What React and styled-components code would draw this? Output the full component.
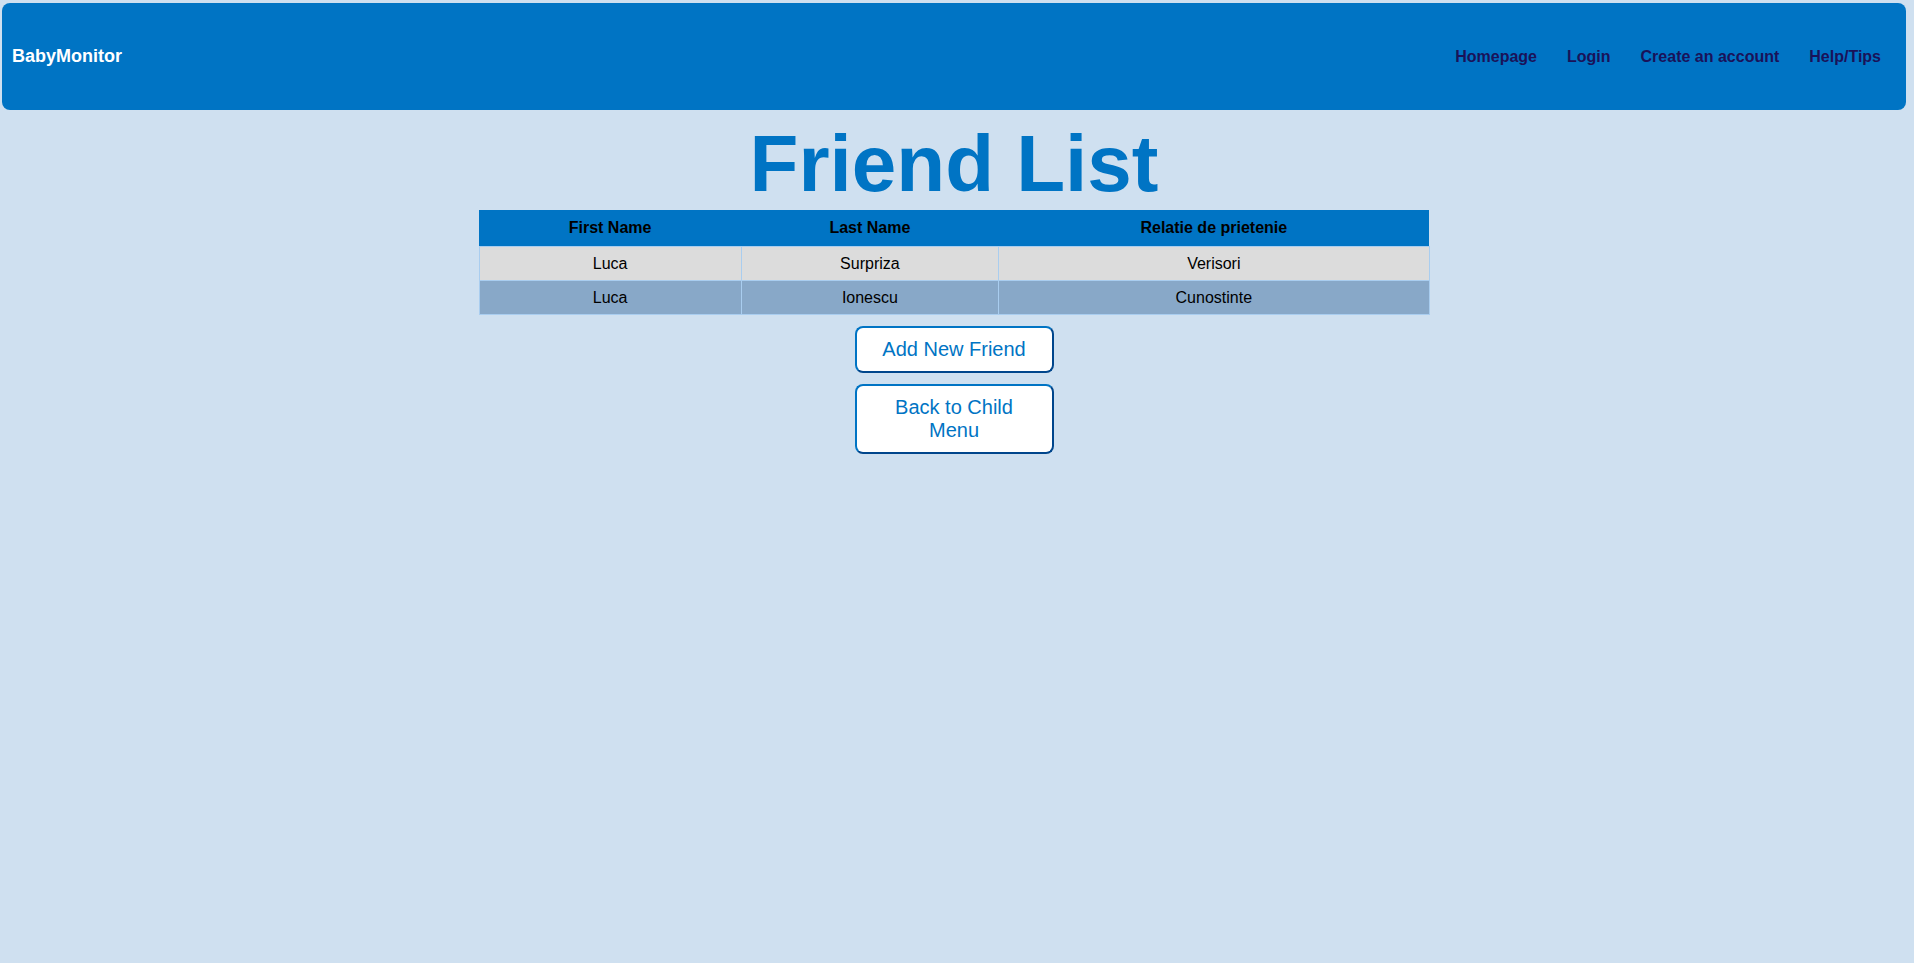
import React from "react";
import styled, { createGlobalStyle } from "styled-components";

// === styles === //

const GlobalStyle = createGlobalStyle`
  html, body {
    margin: 0;
    padding: 0;
    background: #cfe0f0;
    font-family: "Liberation Sans", Arial, sans-serif;
  }
  body {
    min-height: 963px;
  }
`;

const Page = styled.div`
  padding: 3px 8px 0 2px;
  display: flex;
  flex-direction: column;
  align-items: center;
`;

const Nav = styled.nav`
  box-sizing: border-box;
  width: 100%;
  height: 107px;
  background: #0074c4;
  border-radius: 8px;
  display: flex;
  align-items: center;
  justify-content: space-between;
  padding: 0 25px 0 10px;
`;

const Logo = styled.a`
  color: #fff;
  font-size: 18px;
  font-weight: bold;
  text-decoration: none;
`;

const NavMenu = styled.ul`
  display: flex;
  gap: 30px;
  list-style: none;
  margin: 0;
  padding: 0;
`;

const NavLink = styled.a`
  color: #1a1259;
  font-size: 16px;
  font-weight: bold;
  text-decoration: none;
  cursor: pointer;
`;

const Title = styled.h1`
  margin: 8px 0 0;
  color: #0074c4;
  font-size: 80px;
  line-height: 92px;
  font-weight: bold;
`;

const Table = styled.table`
  width: 951px;
  border-collapse: collapse;
  font-size: 16px;
  color: #000;
`;

const HeadCell = styled.th`
  background: #0074c4;
  height: 36px;
  padding: 0;
  font-weight: bold;
  width: ${(p) => p.$w};
`;

const Row = styled.tr`
  background: ${(p) => (p.$alt ? "#88a8c8" : "#dcdcdc")};
`;

const Cell = styled.td`
  border: 1px solid #a9cdef;
  height: 33px;
  padding: 0;
  text-align: center;
`;

const Actions = styled.div`
  display: flex;
  flex-direction: column;
  gap: 11px;
  margin-top: 11px;
`;

const Button = styled.button`
  box-sizing: border-box;
  width: 199px;
  padding: 10px 22px;
  background: #fff;
  color: #0074c4;
  font-family: "Liberation Sans", Arial, sans-serif;
  font-size: 20px;
  line-height: 23px;
  border: 2px solid;
  border-color: #0074c4 #00468c #00468c #0074c4;
  border-radius: 8px;
  cursor: pointer;
`;

// === data === //

const friends = [
  { first: "Luca", last: "Surpriza", relation: "Verisori" },
  { first: "Luca", last: "Ionescu", relation: "Cunostinte" },
];

// === component === //

export default function App() {
  return (
    <>
      <GlobalStyle />
      <Page>
        <Nav>
          <Logo href="#">BabyMonitor</Logo>
          <NavMenu>
            <li><NavLink>Homepage</NavLink></li>
            <li><NavLink>Login</NavLink></li>
            <li><NavLink>Create an account</NavLink></li>
            <li><NavLink>Help/Tips</NavLink></li>
          </NavMenu>
        </Nav>
        <Title>Friend List</Title>
        <Table>
          <thead>
            <tr>
              <HeadCell $w="27.6%">First Name</HeadCell>
              <HeadCell $w="27.1%">Last Name</HeadCell>
              <HeadCell $w="45.3%">Relatie de prietenie</HeadCell>
            </tr>
          </thead>
          <tbody>
            {friends.map((f, i) => (
              <Row key={i} $alt={i % 2 === 1}>
                <Cell>{f.first}</Cell>
                <Cell>{f.last}</Cell>
                <Cell>{f.relation}</Cell>
              </Row>
            ))}
          </tbody>
        </Table>
        <Actions>
          <Button>Add New Friend</Button>
          <Button>Back to Child Menu</Button>
        </Actions>
      </Page>
    </>
  );
}
